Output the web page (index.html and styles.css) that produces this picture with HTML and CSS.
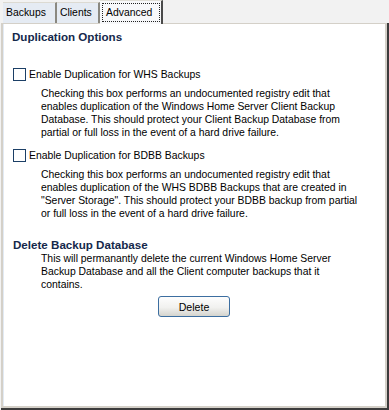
FILE: index.html
```html
<!DOCTYPE html>
<html lang="en">
<head>
    <meta charset="UTF-8">
    <title>Advanced</title>
    <link rel="stylesheet" href="styles.css">
</head>
<body>
    <div class="tabs">
        <div class="tab tab-backups">Backups</div>
        <div class="tab tab-clients">Clients</div>
        <div class="tab active"><span class="focus">Advanced</span></div>
    </div>

    <div class="frame">
        <div class="panel">
            <h2 class="heading">Duplication Options</h2>

            <label class="option">
                <span class="box"></span>
                Enable Duplication for WHS Backups
            </label>
            <p class="note">Checking this box performs an undocumented registry edit that<br>
                enables duplication of the Windows Home Server Client Backup<br>
                Database. This should protect your Client Backup Database from<br>
                partial or full loss in the event of a hard drive failure.</p>

            <label class="option">
                <span class="box"></span>
                Enable Duplication for BDBB Backups
            </label>
            <p class="note">Checking this box performs an undocumented registry edit that<br>
                enables duplication of the WHS BDBB Backups that are created in<br>
                "Server Storage". This should protect your BDBB backup from partial<br>
                or full loss in the event of a hard drive failure.</p>

            <h2 class="heading heading-delete">Delete Backup Database</h2>
            <p class="note note-tight">This will permanantly delete the current Windows Home Server<br>
                Backup Database and all the Client computer backups that it<br>
                contains.</p>

            <div class="actions">
                <button class="button">Delete</button>
            </div>
        </div>
    </div>
</body>
</html>
```

FILE: styles.css
```css
* { margin: 0; padding: 0; box-sizing: border-box; }

body {
    font-family: 'Liberation Sans', Arial, sans-serif;
    font-size: 10.4px;
    background: #f2f2f2;
    color: #000;
    width: 389px;
    height: 410px;
    overflow: hidden;
}

/* tab strip */
.tabs {
    display: flex;
    align-items: flex-end;
    height: 23px;
    padding-left: 3px;
}

.tab {
    height: 21px;
    line-height: 19px;
    padding: 0 3px;
    background: #e5ebf3;
    border-top: 1px solid #dcdad2;
    border-right: 2px solid #8a8880;
}

.tab-backups { width: 54px; }
.tab-clients { width: 43px; }

.tab.active {
    width: 63px;
    height: 24px;
    background: #f7f8fa;
    border-right: 2px solid #4a4a4a;
    border-top: 1px solid #e0ded6;
    padding: 2px 1px 0 2px;
    margin-bottom: -1px;
    position: relative;
    z-index: 1;
}

.focus {
    display: block;
    height: 19px;
    line-height: 17px;
    padding: 0 3px;
    border: 1px dotted #222;
}

/* content frame */
.frame {
    height: 387px;
    border-right: 2px solid #3c3c3c;
    border-bottom: 2px solid #3c3c3c;
    margin-left: 1px;
}

.panel {
    height: 100%;
    background: #fff;
    border-top: 1px solid #d4d0c8;
    border-left: 2px solid #d4d0c8;
    border-right: 2px solid #d4d0c8;
    border-bottom: 2px solid #d4d0c8;
    box-shadow: inset 1px 0 #e2eaf4;
    padding: 6px 0 0 9px;
}

.heading {
    font-size: 11.6px;
    font-weight: bold;
    color: #14284b;
    line-height: 14px;
    margin-bottom: 24px;
}

.heading-delete {
    margin: 18px 0 0;
    padding-left: 1px;
}

.option {
    display: flex;
    align-items: center;
    gap: 3px;
    height: 13px;
    padding-left: 1px;
}

.box {
    width: 13px;
    height: 13px;
    border: 1px solid #1c3f66;
    background: #fff;
}

.note {
    margin: 6px 0 10px 29px;
    line-height: 13px;
    white-space: nowrap;
}

.note-tight {
    margin: 0 0 5px 29px;
}

.actions {
    display: flex;
    justify-content: center;
    padding-right: 9px;
}

.button {
    width: 72px;
    height: 21px;
    font-family: inherit;
    font-size: 10.6px;
    color: #000;
    border: 1px solid #3c6ea0;
    border-radius: 3px;
    background: linear-gradient(#fdfdfd, #f1f1ef 55%, #d4d4ce);
}
```
